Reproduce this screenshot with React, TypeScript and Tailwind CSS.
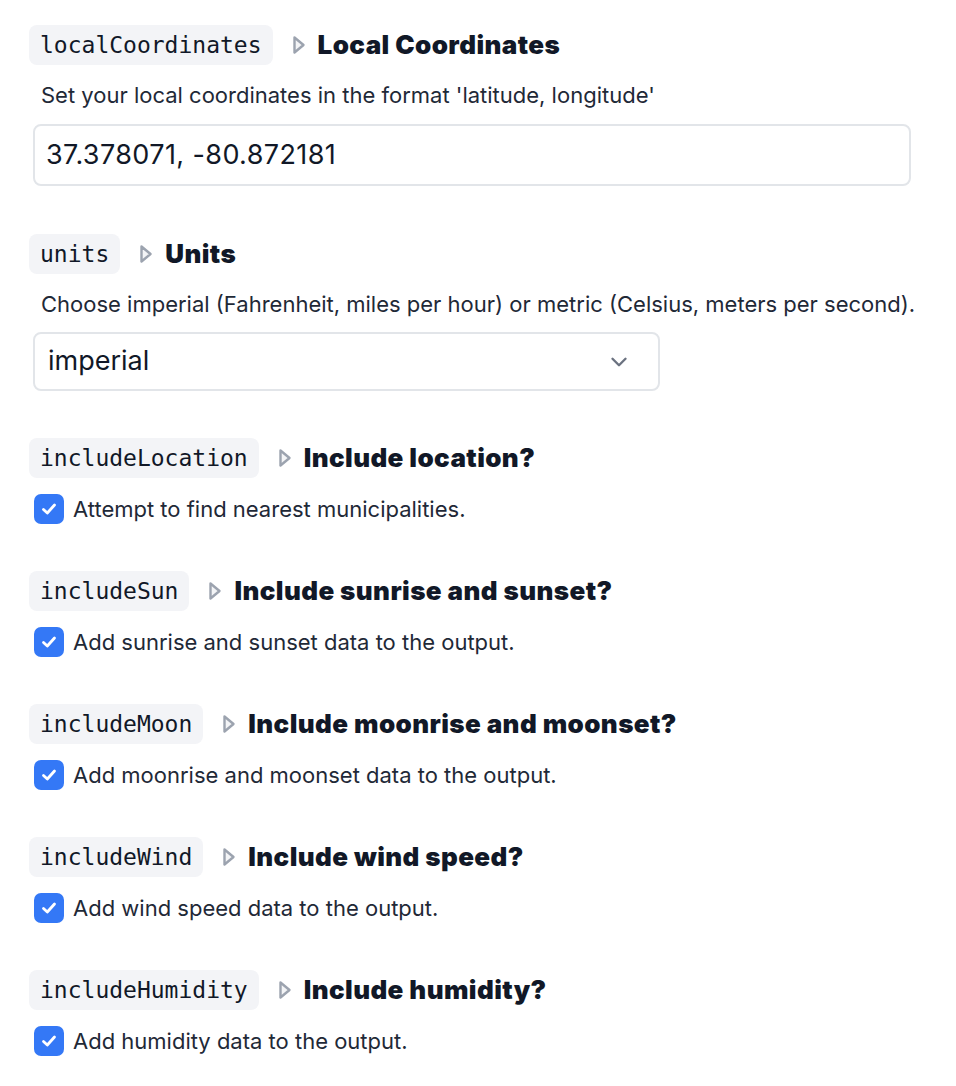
import React from 'react';
import { ChevronDown } from 'lucide-react';

const sans = "font-['Inter','Noto_Sans',sans-serif]";

const Caret = () => (
  <svg width="14" height="20" viewBox="0 0 14 20" className="shrink-0">
    <path d="M2.5 2.5 L11.5 10 L2.5 17.5 Z" fill="#f3f4f6" stroke="#9ca3af" strokeWidth="2.4" strokeLinejoin="round" />
  </svg>
);

const FieldHeader: React.FC<{ name: string; title: string }> = ({ name, title }) => (
  <div className="flex items-center">
    <code className="flex h-[40px] items-center rounded-lg bg-[#f3f4f7] px-[11px] font-['DejaVu_Sans_Mono',monospace] text-[23px] text-[#111827]">
      {name}
    </code>
    <span className="ml-[19px] mr-[12px] flex items-center">
      <Caret />
    </span>
    <h3 className={`${sans} text-[26px] leading-[34px] font-black tracking-[0.4px] text-[#111827]`}>{title}</h3>
  </div>
);

const CheckField: React.FC<{ name: string; title: string; desc: string }> = ({ name, title, desc }) => (
  <section className="mb-[47px]">
    <FieldHeader name={name} title={title} />
    <label className="mt-[16px] flex items-center gap-[9px] pl-[5px]">
      <span className="flex h-[30px] w-[30px] items-center justify-center rounded-[7px] bg-[#3478f6]">
        <svg width="18" height="18" viewBox="0 0 18 18">
          <path d="M3.5 9.5 L7.3 13 L14.5 5" fill="none" stroke="white" strokeWidth="2.8" strokeLinecap="round" strokeLinejoin="round" />
        </svg>
      </span>
      <span className={`${sans} text-[22px] leading-[28px] text-[#1f2937]`}>{desc}</span>
    </label>
  </section>
);

export default function App() {
  return (
    <div className={`min-h-screen bg-white pl-[29px] pr-[20px] pt-[25px] ${sans}`}>
      <section className="mb-[48px]">
        <FieldHeader name="localCoordinates" title="Local Coordinates" />
        <p className="mt-[16px] pl-[12px] text-[22px] leading-[28px] text-[#1f2937]">
          Set your local coordinates in the format 'latitude, longitude'
        </p>
        <div className="ml-[4px] mt-[15px] flex h-[62px] w-[878px] items-center rounded-lg border-2 border-[#e2e5e9] px-[11px] text-[27px] tracking-[0.4px] text-[#111827]">
          37.378071, -80.872181
        </div>
      </section>

      <section className="mb-[47px]">
        <FieldHeader name="units" title="Units" />
        <p className="mt-[16px] pl-[12px] text-[22px] leading-[28px] text-[#1f2937] whitespace-nowrap">
          Choose imperial (Fahrenheit, miles per hour) or metric (Celsius, meters per second).
        </p>
        <div className="ml-[4px] mt-[14px] flex h-[59px] w-[627px] items-center justify-between rounded-lg border-2 border-[#e2e5e9] pl-[13px] pr-[26px] text-[27px] text-[#111827]">
          <span>imperial</span>
          <ChevronDown size={26} strokeWidth={2.2} className="text-[#6b7280]" />
        </div>
      </section>

      <CheckField name="includeLocation" title="Include location?" desc="Attempt to find nearest municipalities." />
      <CheckField name="includeSun" title="Include sunrise and sunset?" desc="Add sunrise and sunset data to the output." />
      <CheckField name="includeMoon" title="Include moonrise and moonset?" desc="Add moonrise and moonset data to the output." />
      <CheckField name="includeWind" title="Include wind speed?" desc="Add wind speed data to the output." />
      <CheckField name="includeHumidity" title="Include humidity?" desc="Add humidity data to the output." />
    </div>
  );
}
